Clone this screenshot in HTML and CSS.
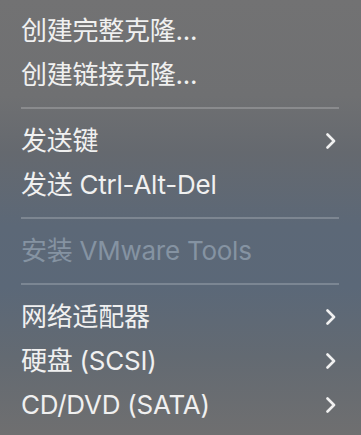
FILE: index.html
```html
<!DOCTYPE html>
<html lang="zh-CN">
<head>
<meta charset="utf-8">
<link rel="stylesheet" href="styles.css">
</head>
<body>
<div class="menu">
  <div class="item"><span class="label">创建完整克隆...</span></div>
  <div class="item"><span class="label">创建链接克隆...</span></div>
  <div class="sep"></div>
  <div class="item"><span class="label">发送键</span><svg class="chev" viewBox="0 0 10 16"><polyline points="1.5,1.5 8,8 1.5,14.5"/></svg></div>
  <div class="item"><span class="label">发送 Ctrl-Alt-Del</span></div>
  <div class="sep"></div>
  <div class="item disabled"><span class="label">安装 VMware Tools</span></div>
  <div class="sep"></div>
  <div class="item"><span class="label">网络适配器</span><svg class="chev" viewBox="0 0 10 16"><polyline points="1.5,1.5 8,8 1.5,14.5"/></svg></div>
  <div class="item"><span class="label">硬盘 (SCSI)</span><svg class="chev" viewBox="0 0 10 16"><polyline points="1.5,1.5 8,8 1.5,14.5"/></svg></div>
  <div class="item"><span class="label">CD/DVD (SATA)</span><svg class="chev" viewBox="0 0 10 16"><polyline points="1.5,1.5 8,8 1.5,14.5"/></svg></div>
</div>
</body>
</html>
```
FILE: styles.css
```css
html, body {
  margin: 0;
  padding: 0;
}
body {
  width: 361px;
  height: 435px;
  overflow: hidden;
}
.menu {
  box-sizing: border-box;
  width: 361px;
  height: 435px;
  padding: 9px 0 0 0;
  display: flex;
  flex-direction: column;
  background: linear-gradient(180deg, #727273 0%, #6f7072 22%, #65696f 35%, #5c6877 52%, #5b6878 66%, #636a72 82%, #6f6f70 100%);
  font-family: Inter, "Noto Sans CJK SC", sans-serif;
  font-size: 26px;
  letter-spacing: -0.25px;
  color: #f0f0f0;
}
.item {
  height: 44px;
  display: flex;
  align-items: center;
  justify-content: space-between;
  padding: 0 25px 0 21px;
}
.label {
  white-space: nowrap;
  line-height: 1;
}
.disabled .label {
  color: #8593a2;
}
.sep {
  height: 22px;
  display: flex;
  align-items: center;
  padding: 0 22px 0 21px;
}
.sep::before {
  content: "";
  flex: 1;
  height: 2px;
  background: rgba(255, 255, 255, 0.2);
}
.chev {
  width: 10px;
  height: 16px;
  fill: none;
  stroke: #f0f0f0;
  stroke-width: 2.6;
  stroke-linecap: round;
  stroke-linejoin: round;
}
```
